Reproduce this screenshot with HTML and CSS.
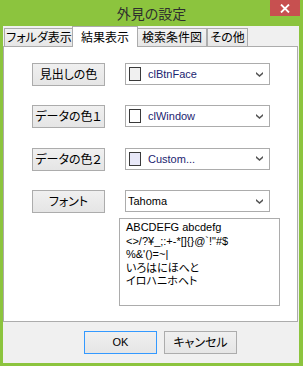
FILE: index.html
```html
<!DOCTYPE html>
<html lang="ja">
  <head>
    <meta charset="UTF-8" />
    <title>外見の設定</title>
    <link rel="stylesheet" href="styles.css">
  </head>
  <body>
    <div class="window">
      <!-- タイトルバー -->
      <div class="titlebar">
        <div class="title">外見の設定</div>
        <div class="close-btn">
          <svg width="10" height="9" viewBox="0 0 10 9">
            <path d="M1 0.5 L9 8.5 M9 0.5 L1 8.5" stroke="#fff" stroke-width="1.8" fill="none" />
          </svg>
        </div>
      </div>

      <div class="client">
        <!-- タブ -->
        <div class="tabs">
          <div class="tab tab-folder">フォルダ表示</div>
          <div class="tab tab-active">結果表示</div>
          <div class="tab tab-search">検索条件図</div>
          <div class="tab tab-other">その他</div>
        </div>

        <!-- 結果表示ページ -->
        <div class="panel">
          <div class="row">
            <div class="btn">見出しの色</div>
            <div class="combo">
              <span class="swatch swatch-btnface"></span>
              <span class="combo-text color-name">clBtnFace</span>
              <svg class="chevron" width="7" height="5" viewBox="0 0 7 5">
                <path d="M0 0 L3.5 3 L7 0 L7 2 L3.5 5 L0 2 Z" fill="#555" />
              </svg>
            </div>
          </div>
          <div class="row">
            <div class="btn">データの色１</div>
            <div class="combo">
              <span class="swatch swatch-window"></span>
              <span class="combo-text color-name">clWindow</span>
              <svg class="chevron" width="7" height="5" viewBox="0 0 7 5">
                <path d="M0 0 L3.5 3 L7 0 L7 2 L3.5 5 L0 2 Z" fill="#555" />
              </svg>
            </div>
          </div>
          <div class="row">
            <div class="btn">データの色２</div>
            <div class="combo">
              <span class="swatch swatch-custom"></span>
              <span class="combo-text color-name">Custom...</span>
              <svg class="chevron" width="7" height="5" viewBox="0 0 7 5">
                <path d="M0 0 L3.5 3 L7 0 L7 2 L3.5 5 L0 2 Z" fill="#555" />
              </svg>
            </div>
          </div>
          <div class="row">
            <div class="btn">フォント</div>
            <div class="combo combo-font">
              <span class="combo-text">Tahoma</span>
              <svg class="chevron" width="7" height="5" viewBox="0 0 7 5">
                <path d="M0 0 L3.5 3 L7 0 L7 2 L3.5 5 L0 2 Z" fill="#555" />
              </svg>
            </div>
          </div>

          <!-- フォントのプレビュー -->
          <div class="preview">
            <div>ABCDEFG abcdefg</div>
            <div>&lt;&gt;/?¥_;:+-*[]{}@`!"#$</div>
            <div>%&amp;'()=~|</div>
            <div>いろはにほへと</div>
            <div>イロハニホヘト</div>
          </div>
        </div>

        <!-- OK / キャンセル -->
        <div class="footer">
          <div class="btn btn-default">OK</div>
          <div class="btn">キャンセル</div>
        </div>
      </div>
    </div>
  </body>
</html>
```

FILE: styles.css
```css
body {
  margin: 0;
  width: 303px;
  height: 366px;
  overflow: hidden;
  background: #8cc43e;
  font-family: "Liberation Sans", "Noto Sans CJK JP", sans-serif;
  font-feature-settings: "palt";
}

.window {
  display: flex;
  flex-direction: column;
  height: 366px;
}

/* タイトルバー */
.titlebar {
  height: 26px;
  display: grid;
  grid-template-columns: 1fr auto 1fr;
}

.title {
  grid-column: 2;
  font-family: "Noto Sans CJK JP", sans-serif;
  font-size: 14px;
  line-height: 14px;
  padding-top: 6px;
  color: #2e2e2e;
}

.close-btn {
  grid-column: 3;
  justify-self: end;
  align-self: start;
  width: 30px;
  height: 16px;
  margin-right: 3px;
  background: #c75050;
  display: flex;
  align-items: center;
  justify-content: center;
}

.client {
  flex: 1;
  margin: 0 4px 3px 3px;
  background: #f0f0f0;
  display: flex;
  flex-direction: column;
}

/* タブ */
.tabs {
  display: flex;
  align-items: flex-end;
  padding-left: 1px;
  height: 20px;
}

.tab {
  box-sizing: border-box;
  height: 18px;
  border: 1px solid #acacac;
  border-bottom: none;
  background: linear-gradient(#f2f2f2, #e6e6e6);
  font-family: "Noto Sans CJK JP", sans-serif;
  font-size: 12px;
  line-height: 15px;
  text-align: center;
  color: #000;
  white-space: nowrap;
}

.tab-folder {
  width: 70px;
}

.tab-active {
  position: relative;
  z-index: 1;
  width: 66px;
  height: 21px;
  margin: 0 -1px -1px -2px;
  padding-top: 2px;
  background: #fff;
}

.tab-search {
  width: 70px;
}

.tab-other {
  width: 41px;
}

/* ページ */
.panel {
  box-sizing: border-box;
  height: 276px;
  margin-right: 1px;
  border: 1px solid #acacac;
  background: #fff;
  padding: 16px 0 0 28px;
}

.row {
  display: flex;
  align-items: flex-start;
  gap: 20px;
  margin-bottom: 19.4px;
}

.row:nth-child(4) {
  margin-bottom: 5px;
}

.btn {
  box-sizing: border-box;
  width: 73px;
  height: 23px;
  border: 1px solid #acacac;
  background: linear-gradient(#f0f0f0, #e5e5e5);
  font-family: "Noto Sans CJK JP", sans-serif;
  font-size: 12px;
  line-height: 20px;
  text-align: center;
  color: #000;
  white-space: nowrap;
}

.combo {
  box-sizing: border-box;
  width: 145px;
  height: 22px;
  border: 1px solid #acacac;
  background: #fff;
  display: flex;
  align-items: center;
  padding: 0 6px 0 3px;
}

.combo-font {
  padding-left: 2px;
}

.swatch {
  box-sizing: border-box;
  width: 12px;
  height: 14px;
  border: 1px solid #3a3a3a;
  margin-right: 7px;
}

.swatch-btnface {
  background: #f0f0f0;
}

.swatch-window {
  background: #fff;
}

.swatch-custom {
  background: #e8e8f8;
}

.combo-text {
  flex: 1;
  font-size: 11px;
  color: #000;
}

.color-name {
  color: #1b2470;
}

.chevron {
  flex: none;
}

/* フォントのプレビュー */
.preview {
  box-sizing: border-box;
  width: 161px;
  height: 88px;
  margin-left: 87px;
  border: 1px solid #acacac;
  padding: 2px 0 0 6px;
  font-size: 11px;
  line-height: 13.5px;
  color: #000;
}

.footer {
  flex: 1;
  display: flex;
  gap: 7px;
  padding: 9px 0 0 81px;
}

.btn-default {
  border-color: #3399ff;
  font-family: "Liberation Sans", sans-serif;
  font-size: 11px;
}
```
